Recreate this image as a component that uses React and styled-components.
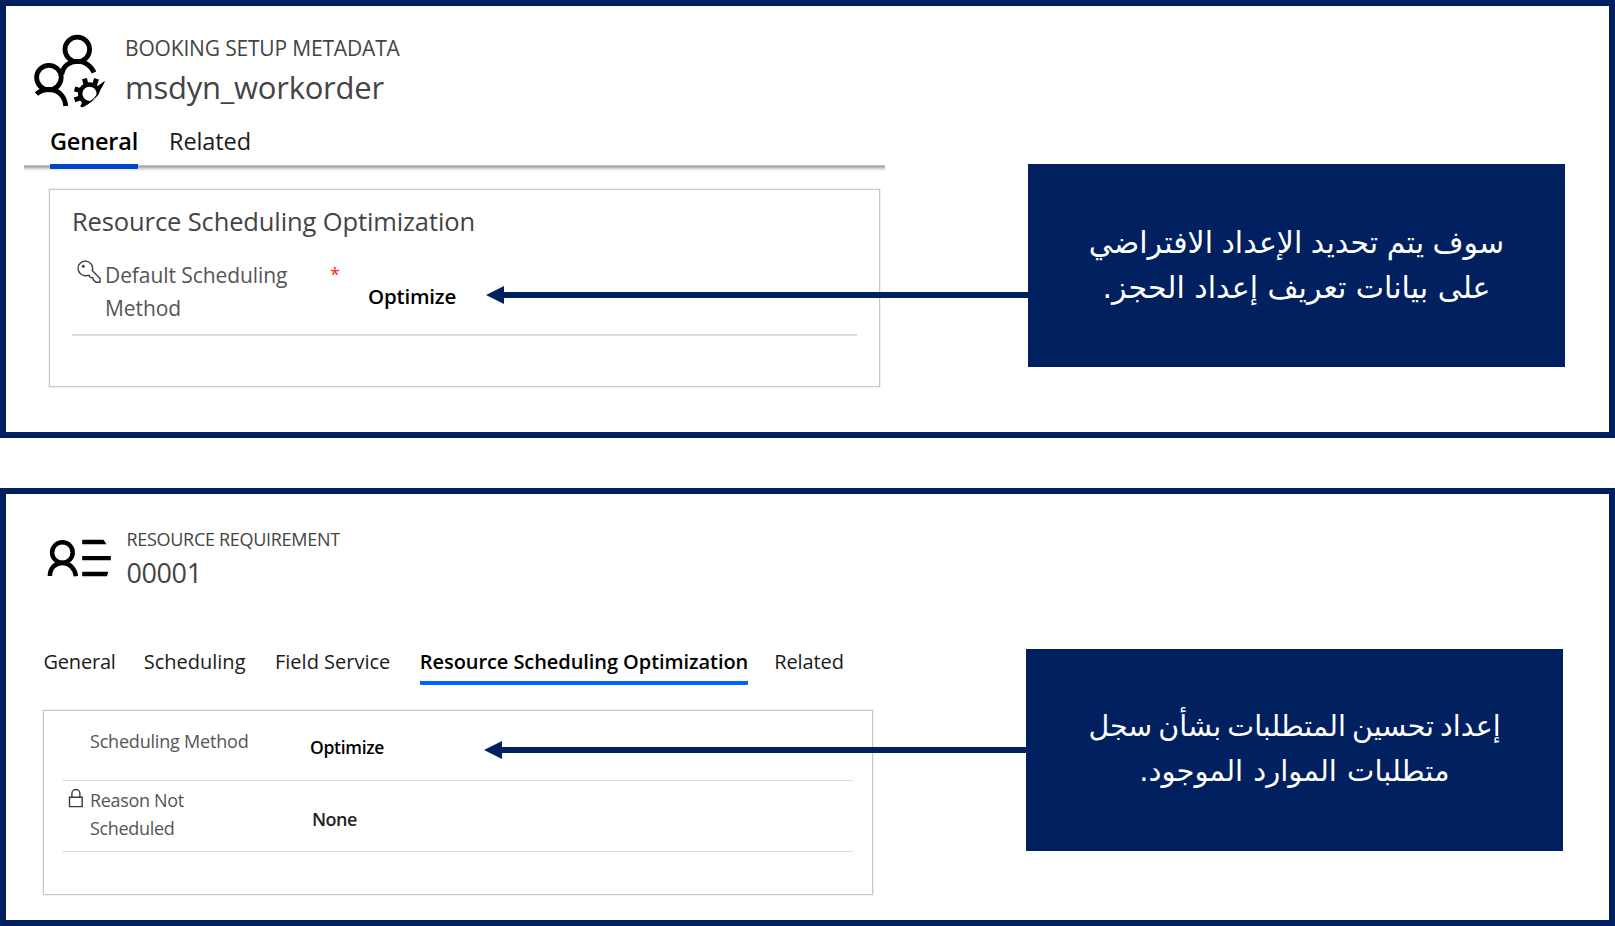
import React from 'react';
import styled, { createGlobalStyle } from 'styled-components';

const NAVY = '#00205f';

const GlobalStyle = createGlobalStyle`
  body {
    margin: 0;
    background: #fff;
    font-family: 'Open Sans', 'Noto Sans', sans-serif;
  }
`;

const Page = styled.main`
  display: flex;
  flex-direction: column;
  gap: 50px;
  width: 1615px;
`;

const Panel = styled.section`
  box-sizing: border-box;
  display: flex;
  align-items: flex-start;
  height: 438px;
  border: 6px solid ${NAVY};
  background: #fff;
`;

const Form = styled.div`
  flex: none;
  width: ${(p) => p.$width}px;
`;

const Header = styled.header`
  display: flex;
  gap: ${(p) => p.$gap}px;
  padding: ${(p) => p.$padding};

  svg {
    flex: none;
    display: block;
    margin-top: ${(p) => p.$iconTop || 0}px;
  }
`;

const Entity = styled.div`
  font-size: ${(p) => p.$size}px;
  line-height: ${(p) => p.$line}px;
  letter-spacing: ${(p) => p.$track}px;
  color: #444;
  white-space: nowrap;
`;

const RecordName = styled.h1`
  margin: ${(p) => p.$top}px 0 0;
  font-size: ${(p) => p.$size}px;
  font-weight: 400;
  line-height: ${(p) => p.$line}px;
  letter-spacing: ${(p) => p.$track}px;
  color: #444;
`;

const TabBar = styled.nav`
  display: flex;
  align-items: flex-start;
  margin: ${(p) => p.$margin};
  padding: ${(p) => p.$padding};
  font-size: ${(p) => p.$size}px;
  line-height: ${(p) => p.$line}px;
  ${(p) =>
    p.$ruled &&
    `width: 835px;
     background: linear-gradient(#c0c0c0 0 1px, #a9a9a9 1px 2px, #b9b9b9 2px 3px, #d2d2d2 3px 4px, #e8e8e8 4px 5px, #f6f6f6 5px 6px)
       no-repeat 0 100% / 100% 6px;`}
`;

const Tab = styled.a`
  margin-left: ${(p) => p.$gap || 0}px;
  padding-bottom: ${(p) => p.$drop || 0}px;
  border-bottom: ${(p) => (p.$accent ? `${p.$bar}px solid ${p.$accent}` : 'none')};
  border-radius: 1px;
  font-weight: ${(p) => (p.$accent ? 600 : 400)};
  letter-spacing: ${(p) => p.$track || 0}px;
  color: ${(p) => (p.$accent ? '#000' : '#1a1a1a')};
  white-space: nowrap;
`;

const Card = styled.section`
  box-sizing: border-box;
  width: ${(p) => p.$width}px;
  height: ${(p) => p.$height}px;
  margin: ${(p) => p.$margin};
  padding: ${(p) => p.$padding};
  border: 1px solid #c8c8c8;
  box-shadow: 0 0 0 1px #f2f2f2;
`;

const CardTitle = styled.h2`
  margin: 0 0 20px;
  font-size: 25.5px;
  font-weight: 400;
  line-height: 34px;
  letter-spacing: -0.12px;
  color: #444;
`;

const Row = styled.div`
  box-sizing: border-box;
  display: flex;
  align-items: flex-start;
  width: ${(p) => p.$width}px;
  height: ${(p) => p.$height}px;
  padding-top: ${(p) => p.$top || 0}px;
  border-bottom: ${(p) => p.$rule} solid #dcdcdc;
`;

const IconSlot = styled.span`
  box-sizing: border-box;
  flex: none;
  width: ${(p) => p.$width}px;
  padding: ${(p) => p.$padding || 0};

  svg {
    display: block;
  }
`;

const Label = styled.span`
  box-sizing: border-box;
  flex: none;
  width: ${(p) => p.$width}px;
  margin-top: ${(p) => p.$top || 0}px;
  padding-right: ${(p) => p.$pad}px;
  font-size: ${(p) => p.$size}px;
  line-height: ${(p) => p.$line}px;
  letter-spacing: ${(p) => p.$track}px;
  color: #555;
`;

const Required = styled.span`
  flex: none;
  width: 38px;
  font-size: 18px;
  line-height: 32px;
  color: #f22;
`;

const Value = styled.span`
  margin-top: ${(p) => p.$top}px;
  font-size: ${(p) => p.$size}px;
  font-weight: 600;
  line-height: ${(p) => p.$line}px;
  letter-spacing: ${(p) => p.$track}px;
  color: ${(p) => p.$color || '#000'};
`;

const Callout = styled.aside`
  position: relative;
  box-sizing: border-box;
  flex: none;
  width: 537px;
  height: ${(p) => p.$height}px;
  margin-top: ${(p) => p.$top}px;
  padding-top: ${(p) => p.$pad}px;
  background: ${NAVY};
  color: #fff;
  direction: rtl;
  text-align: center;
  font-family: 'DejaVu Sans', sans-serif;
  line-height: 45px;
`;

const CalloutLine = styled.div`
  font-size: ${(p) => p.$size}px;
  word-spacing: ${(p) => p.$space}px;
  white-space: nowrap;
`;

const Arrow = styled.span`
  position: absolute;
  right: 100%;
  top: ${(p) => p.$top}px;
  display: flex;
  align-items: center;
  width: ${(p) => p.$length}px;
  height: 18px;
  direction: ltr;

  &::before {
    content: '';
    border: 9px solid transparent;
    border-right: 18px solid ${NAVY};
    border-left: 0;
  }

  &::after {
    content: '';
    flex: 1;
    height: 6px;
    background: ${NAVY};
  }
`;

const PeopleGearIcon = () => (
  <svg width="71" height="75" viewBox="0 0 71 75" fill="none" stroke="#000" strokeWidth="4.8">
    <defs>
      <clipPath id="gear-edge">
        <path d="M36 40H74L69.700 50Q66 56 64.500 60.500Q58 69 48 73.700L36 75z" />
      </clipPath>
    </defs>
    <circle cx="43.300" cy="15.400" r="12.300" />
    <circle cx="14.900" cy="43.600" r="12.300" />
    <path d="M27.800 40.500C29 32 35.500 27.300 43.300 27.300c7.500 0 13.600 4.600 16.800 11.200" />
    <path d="M2.500 60C6 56.700 10 55.500 14.900 55.500c9.500 0 16.300 7 16.800 16.500" />
    <g clipPath="url(#gear-edge)">
      <circle cx="55.500" cy="59.800" r="9.300" strokeWidth="4.400" />
      <path
        d="M52 51l-1.500-6.300M60.500 51l2-6.300M47.500 56.800l-6.900-2M47.500 63.500l-6.900 2.300M51 68l-2.500 5.500M64 55l8-6"
        strokeWidth="5"
      />
    </g>
    <path d="M66 55.500Q61.500 65.500 51 71" strokeWidth="0.900" />
  </svg>
);

const PersonListIcon = () => (
  <svg width="65" height="40" viewBox="0 0 65 40" fill="none" stroke="#000" strokeWidth="4.500">
    <circle cx="15.400" cy="14.500" r="10.300" />
    <path d="M2.900 38C3 29.600 8.500 25 15.400 25c7 0 12.500 5 13.500 13.300" />
    <path
      d="M35.200 1.800H56.500L59.500 6.200H35.200zM35.200 17.900H63.800V22.300H35.200zM35.200 33.700H61.300L60 38.300H35.200z"
      fill="#000"
      stroke="none"
    />
  </svg>
);

const KeyIcon = () => (
  <svg width="24" height="24" viewBox="0 0 24 24" fill="none" stroke="#3c3c44" strokeWidth="1.400">
    <path d="M15.300 10.500A7.300 7.300 0 1 0 9.600 15.600L12 15.200L13.300 17.400L15.800 17.700L16.300 19.800L19 22.300H23V18.500z" />
    <circle cx="6.300" cy="6.300" r="0.800" fill="#3c3c44" />
  </svg>
);

const LockIcon = () => (
  <svg width="16" height="20" viewBox="0 0 16 20" fill="none" stroke="#3a3a3a" strokeWidth="1.400">
    <path d="M1.500 9.200h12.700v9.400H1.500z" />
    <path d="M3.900 9.200V5.500a4 4 0 0 1 8 0v3.700" />
  </svg>
);

export default function App() {
  return (
    <>
      <GlobalStyle />
      <Page>
        <Panel>
          <Form $width={1022}>
            <Header $gap={20} $padding="28px 0 0 28px">
              <PeopleGearIcon />
              <div>
                <Entity $size={21} $line={28} $track={-0.17}>BOOKING SETUP METADATA</Entity>
                <RecordName $top={5} $size={31} $line={40} $track={-0.25}>msdyn_workorder</RecordName>
              </div>
            </Header>
            <TabBar $ruled $size={23.5} $line={32} $margin="0 0 0 18px" $padding="16px 0 2px 26px">
              <Tab $accent="#0046c8" $bar={5} $drop={7} $track={-0.2}>General</Tab>
              <Tab $gap={31} $track={-0.1}>Related</Tab>
            </TabBar>
            <Card $width={831} $height={198} $margin="18px 0 0 43px" $padding="14px 0 0 22px">
              <CardTitle>Resource Scheduling Optimization</CardTitle>
              <Row $width={785} $height={78} $rule="2px">
                <IconSlot $width={33} $padding="2px 0 0 5px"><KeyIcon /></IconSlot>
                <Label $width={225} $top={1} $pad={35} $size={21} $line={32.5} $track={-0.08}>
                  Default Scheduling Method
                </Label>
                <Required>*</Required>
                <Value $top={22} $size={20.5} $line={32} $track={-0.2}>Optimize</Value>
              </Row>
            </Card>
          </Form>
          <Callout $top={158} $height={203} $pad={56}>
            <CalloutLine $size={30} $space={-1.1}>سوف يتم تحديد الإعداد الافتراضي</CalloutLine>
            <CalloutLine $size={30} $space={0}>على بيانات تعريف إعداد الحجز.</CalloutLine>
            <Arrow $top={122} $length={542} />
          </Callout>
        </Panel>

        <Panel>
          <Form $width={1020}>
            <Header $gap={14.5} $padding="32px 0 0 41px" $iconTop={12}>
              <PersonListIcon />
              <div>
                <Entity $size={18} $line={26} $track={-0.3}>RESOURCE REQUIREMENT</Entity>
                <RecordName $top={3} $size={27} $line={36} $track={-0.4}>00001</RecordName>
              </div>
            </Header>
            <TabBar $size={20} $line={28} $margin="57px 0 0 37.500px" $padding="0">
              <Tab $track={-0.2}>General</Tab>
              <Tab $gap={28}>Scheduling</Tab>
              <Tab $gap={29.5}>Field Service</Tab>
              <Tab $gap={29.5} $accent="#0062ff" $bar={4} $drop={5} $track={-0.07}>
                Resource Scheduling Optimization
              </Tab>
              <Tab $gap={26} $track={-0.1}>Related</Tab>
            </TabBar>
            <Card $width={830} $height={185} $margin="25px 0 0 37px" $padding="0 0 0 18px">
              <Row $width={791} $height={70} $top={17} $rule="1px">
                <IconSlot $width={28} />
                <Label $width={220} $pad={50} $size={18} $line={27.7} $track={-0.2}>Scheduling Method</Label>
                <Value $top={5} $size={17.5} $line={28} $track={-0.3}>Optimize</Value>
              </Row>
              <Row $width={791} $height={71} $top={5} $rule="1px">
                <IconSlot $width={28} $padding="2px 0 0 6px"><LockIcon /></IconSlot>
                <Label $width={222} $top={1} $pad={52} $size={18} $line={27.7} $track={-0.33}>Reason Not Scheduled</Label>
                <Value $top={19} $size={18} $line={28} $track={-0.5} $color="#222">None</Value>
              </Row>
            </Card>
          </Form>
          <Callout $top={155} $height={202} $pad={55}>
            <CalloutLine $size={28.5} $space={-3}>إعداد تحسين المتطلبات بشأن سجل</CalloutLine>
            <CalloutLine $size={29} $space={1}>متطلبات الموارد الموجود.</CalloutLine>
            <Arrow $top={92} $length={542} />
          </Callout>
        </Panel>
      </Page>
    </>
  );
}
